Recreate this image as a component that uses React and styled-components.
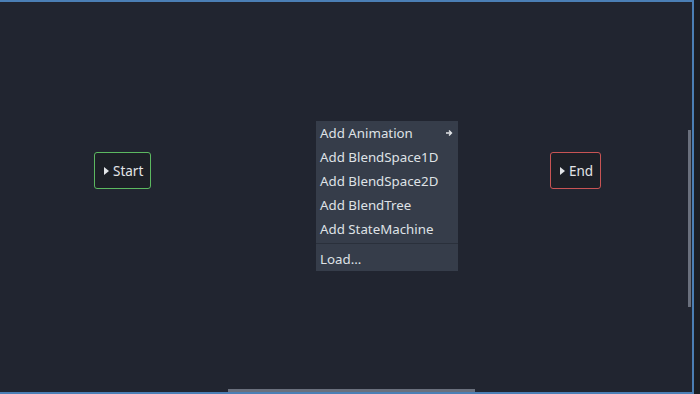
import styled, { createGlobalStyle } from 'styled-components';

const Global = createGlobalStyle`
    html, body {
        margin: 0;
        padding: 0;
        background: #1c1f26;
        font-family: "Noto Sans", "DejaVu Sans", sans-serif;
    }
`

const Window = styled.div`
    display: flex;
    width: 700px;
    height: 394px;
    background: #1c1f26;
`

const Panel = styled.div`
    position: relative;
    width: 692px;
    height: 390px;
    background: #212530;
    border-top: 2px solid #4b7fb5;
    border-right: 2px solid #4b7fb5;
    border-bottom: 2px solid #4b7fb5;
    overflow: hidden;
`

const Strip = styled.div`
    flex: 1;
    background: #1b1e25;
`

const Node = styled.div`
    position: absolute;
    top: 150px;
    left: ${p => p.x}px;
    height: 37px;
    display: flex;
    align-items: center;
    gap: 4px;
    padding: 0 7px 0 9px;
    box-sizing: border-box;
    background: #1d2027;
    border: 1px solid ${p => p.color};
    border-radius: 3px;
    color: #e3e5e8;
    font-size: 13.5px;
`

const Play = styled.span`
    width: 0;
    height: 0;
    border-top: 4px solid transparent;
    border-bottom: 4px solid transparent;
    border-left: 5px solid #e3e5e8;
`

const Menu = styled.div`
    position: absolute;
    top: 119px;
    left: 316px;
    width: 142px;
    padding: 0;
    background: #363d4a;
    color: #dfe2e6;
    font-size: 13.3px;
`

const Item = styled.div`
    display: flex;
    align-items: center;
    justify-content: space-between;
    height: 24px;
    padding: 0 5px 0 4px;
`

const Separator = styled.div`
    height: 1px;
    margin: 2px 0 3px;
    background: #2a303b;
`

const VScroll = styled.div`
    position: absolute;
    right: 1px;
    top: 128px;
    width: 3px;
    height: 177px;
    background: #6a707d;
`

const HScroll = styled.div`
    position: absolute;
    bottom: 0;
    left: 228px;
    width: 247px;
    height: 3px;
    background: #6a707d;
`

const items = ['Add BlendSpace1D', 'Add BlendSpace2D', 'Add BlendTree', 'Add StateMachine'];

export default function App() {
    return (
        <Window>
            <Global />
            <Panel>
                <Node x={94} color="#5cb860">
                    <Play />
                    <span>Start</span>
                </Node>
                <Node x={550} color="#c85454">
                    <Play />
                    <span>End</span>
                </Node>
                <Menu>
                    <Item>
                        <span>Add Animation</span>
                        <svg width="8" height="8" viewBox="0 0 8 8">
                            <path d="M1 4h5M4 1.5L6.5 4L4 6.5" stroke="#e3e5e8" strokeWidth="1.4" fill="none" />
                        </svg>
                    </Item>
                    {items.map(t => <Item key={t}>{t}</Item>)}
                    <Separator />
                    <Item>Load...</Item>
                </Menu>
                <VScroll />
                <HScroll />
            </Panel>
            <Strip />
        </Window>
    )
}
